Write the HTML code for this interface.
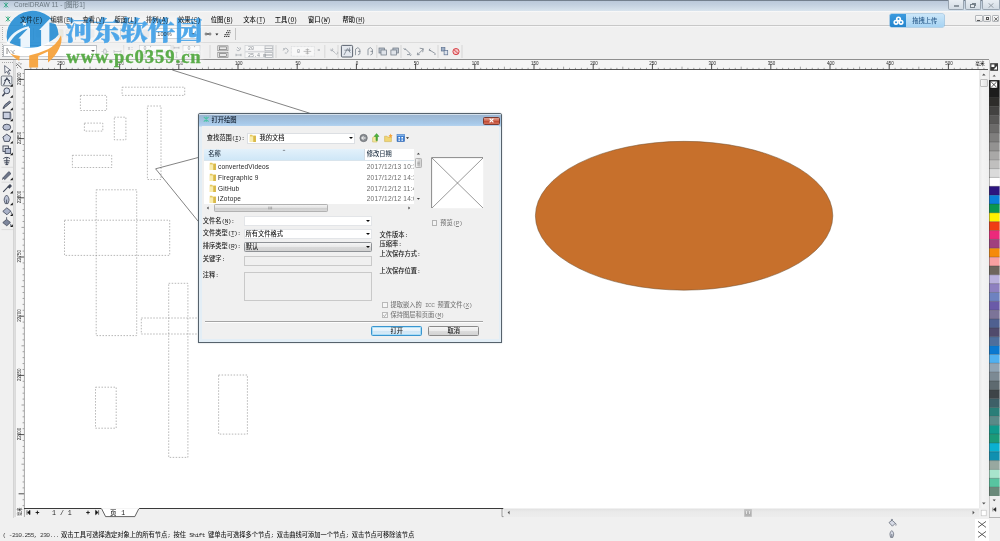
<!DOCTYPE html>
<html lang="zh"><head><meta charset="utf-8"><title>CorelDRAW 11 - [图形1]</title>
<style>
html,body{margin:0;padding:0}
body{width:1000px;height:541px;overflow:hidden;position:relative;background:#f0f0f0;
 font-family:"Liberation Sans","Noto Sans CJK SC",sans-serif;font-size:6.25px;color:#1a1a1a;line-height:1;font-weight:500;will-change:transform}
.a{position:absolute}
.t{position:absolute;white-space:nowrap;line-height:8px;height:8px}
u{text-decoration:underline;text-decoration-thickness:0.5px;text-underline-offset:0.5px;text-decoration-color:rgba(40,40,40,0.55)}
.g{color:#7c7c7c}
.ic{position:absolute;border-radius:1px}
.sep{position:absolute;width:0.6px;background:#c4c4c4}
.fld{position:absolute;background:#fff;border:0.5px solid #b4b8bd;box-sizing:border-box}
.dfld{position:absolute;background:#f0f0f0;border:0.6px solid #c9c9c9;box-sizing:border-box}
.arr{position:absolute;width:0;height:0;border-left:2.3px solid transparent;border-right:2.3px solid transparent;border-top:2.5px solid #0a0a0a;margin-left:-0.4px}
.m{font-family:"Liberation Mono",monospace;letter-spacing:-0.625px}
.m u{text-decoration-thickness:0.5px}
</style></head>
<body>
<div class="a" style="left:0;top:0;width:1000px;height:11px;background:linear-gradient(#aebbcb 0,#bccadb 14%,#c4d1e0 45%,#d3dfea 85%,#d9e4ee 100%)"></div>
<div class="a" style="left:0;top:0;width:1000px;height:0.9px;background:#74808e"></div>
<div class="a" style="left:0;top:10.6px;width:1000px;height:0.8px;background:#a9b3bd"></div>
<svg class="a" style="left:2.6px;top:2.4px" width="6" height="6" viewBox="0 0 8 8"><path d="M1 1L7 7M7 1L1 7M4 0.5V7.5" stroke="#3aa98a" stroke-width="1.2" fill="none"/></svg>
<div class="t" style="left:14px;top:1.2px;font-size:6.6px;color:#6c7982">CorelDRAW 11 - [图形1]</div>
<div class="a" style="left:948.2px;top:0;width:15.8px;height:9.6px;box-sizing:border-box;border:0.7px solid #98a4b0;border-top:none;border-radius:0 0 2px 2px;background:linear-gradient(#e9eef3,#d3dce5)"></div>
<div class="a" style="left:964.7px;top:0;width:16.5px;height:9.6px;box-sizing:border-box;border:0.7px solid #98a4b0;border-top:none;border-radius:0 0 2px 2px;background:linear-gradient(#e9eef3,#d3dce5)"></div>
<div class="a" style="left:982.0px;top:0;width:18.0px;height:9.6px;box-sizing:border-box;border:0.7px solid #98a4b0;border-top:none;border-radius:0 0 2px 2px;background:linear-gradient(#e9eef3,#d3dce5)"></div>
<div class="a" style="left:953.5px;top:5px;width:5.5px;height:2px;box-sizing:border-box;border:0.6px solid #8c969f;background:#fff"></div>
<div class="a" style="left:971.5px;top:2.6px;width:4.5px;height:3.4px;box-sizing:border-box;border:0.6px solid #77828c"></div>
<div class="a" style="left:970px;top:4.2px;width:4.5px;height:3.4px;box-sizing:border-box;border:0.6px solid #77828c;background:#e6ebf0"></div>
<svg class="a" style="left:988px;top:2.5px" width="6" height="5" viewBox="0 0 6 5"><path d="M0.5 0.3L5.5 4.7M5.5 0.3L0.5 4.7" stroke="#8e98a1" stroke-width="0.9"/></svg>
<div class="a" style="left:0;top:11.4px;width:1000px;height:14px;background:linear-gradient(#fbfbfb 0,#f0f0f0 1.6px)"></div>
<div class="a" style="left:0;top:24.8px;width:1000px;height:0.8px;background:#c8c8c8"></div>
<svg class="a" style="left:4.5px;top:15.5px" width="6" height="6" viewBox="0 0 8 8"><path d="M1 1L7 7M7 1L1 7M4 0.5V7.5" stroke="#2fa77c" stroke-width="1.2" fill="none"/></svg>
<div class="t" style="left:20.0px;top:15.9px;font-size:6.3px;font-weight:500;color:#0c0c0c;z-index:3;opacity:0.8">文件<span class="m">(<u>F</u>)</span></div>
<div class="t" style="left:50.5px;top:15.9px;font-size:6.3px;font-weight:500;color:#0c0c0c;z-index:3;opacity:0.8">编辑<span class="m">(<u>E</u>)</span></div>
<div class="t" style="left:82.5px;top:15.9px;font-size:6.3px;font-weight:500;color:#0c0c0c;z-index:3;opacity:0.8">查看<span class="m">(<u>V</u>)</span></div>
<div class="t" style="left:114.5px;top:15.9px;font-size:6.3px;font-weight:500;color:#0c0c0c;z-index:3;opacity:0.8">版面<span class="m">(<u>L</u>)</span></div>
<div class="t" style="left:146.0px;top:15.9px;font-size:6.3px;font-weight:500;color:#0c0c0c;z-index:3;opacity:0.8">排列<span class="m">(<u>A</u>)</span></div>
<div class="t" style="left:178.0px;top:15.9px;font-size:6.3px;font-weight:500;color:#0c0c0c;z-index:3;opacity:0.8">效果<span class="m">(<u>C</u>)</span></div>
<div class="t" style="left:210.7px;top:15.9px;font-size:6.3px;font-weight:500;color:#0c0c0c;z-index:3;opacity:1">位图<span class="m">(<u>B</u>)</span></div>
<div class="t" style="left:243.2px;top:15.9px;font-size:6.3px;font-weight:500;color:#0c0c0c;z-index:3;opacity:1">文本<span class="m">(<u>T</u>)</span></div>
<div class="t" style="left:274.7px;top:15.9px;font-size:6.3px;font-weight:500;color:#0c0c0c;z-index:3;opacity:1">工具<span class="m">(<u>O</u>)</span></div>
<div class="t" style="left:308.0px;top:15.9px;font-size:6.3px;font-weight:500;color:#0c0c0c;z-index:3;opacity:1">窗口<span class="m">(<u>W</u>)</span></div>
<div class="t" style="left:342.5px;top:15.9px;font-size:6.3px;font-weight:500;color:#0c0c0c;z-index:3;opacity:1">帮助<span class="m">(<u>H</u>)</span></div>
<div class="a" style="left:975.0px;top:15px;width:7.8px;height:7.4px;box-sizing:border-box;border:0.6px solid #b3b7bb;background:linear-gradient(#fafafa,#e3e3e3);border-radius:1px"></div>
<div class="a" style="left:983.3px;top:15px;width:7.8px;height:7.4px;box-sizing:border-box;border:0.6px solid #b3b7bb;background:linear-gradient(#fafafa,#e3e3e3);border-radius:1px"></div>
<div class="a" style="left:991.6px;top:15px;width:7.8px;height:7.4px;box-sizing:border-box;border:0.6px solid #b3b7bb;background:linear-gradient(#fafafa,#e3e3e3);border-radius:1px"></div>
<div class="a" style="left:977.3px;top:19.8px;width:3px;height:0.8px;background:#555"></div>
<div class="a" style="left:985.8px;top:17.2px;width:2.8px;height:2.6px;box-sizing:border-box;border:0.6px solid #555"></div>
<svg class="a" style="left:994px;top:17px" width="4" height="4" viewBox="0 0 4 4"><path d="M0.3 0.3L3.7 3.7M3.7 0.3L0.3 3.7" stroke="#555" stroke-width="0.8"/></svg>
<div class="a" style="left:0;top:25.6px;width:1000px;height:16.7px;background:linear-gradient(#fafafa 0,#f0f0f0 1.4px)"></div>
<div class="a" style="left:1.5px;top:27px;width:1px;height:13px;border-left:0.6px dotted #aaa"></div>
<div class="ic" style="left:6.0px;top:30px;width:6.4px;height:6.8px;background:#d9dde3;opacity:0.4;box-shadow:0 0 0 0.4px #b9bec4"></div>
<div class="ic" style="left:15.5px;top:30px;width:6.4px;height:6.8px;background:#e3d7a6;opacity:0.4;box-shadow:0 0 0 0.4px #b9bec4"></div>
<div class="ic" style="left:25.0px;top:30px;width:6.4px;height:6.8px;background:#b9c4d6;opacity:0.4;box-shadow:0 0 0 0.4px #b9bec4"></div>
<div class="ic" style="left:36.0px;top:30px;width:6.4px;height:6.8px;background:#c9c9c9;opacity:0.4;box-shadow:0 0 0 0.4px #b9bec4"></div>
<div class="ic" style="left:47.0px;top:30px;width:6.4px;height:6.8px;background:#d6d6d6;opacity:0.4;box-shadow:0 0 0 0.4px #b9bec4"></div>
<div class="ic" style="left:56.5px;top:30px;width:6.4px;height:6.8px;background:#d9d3b9;opacity:0.4;box-shadow:0 0 0 0.4px #b9bec4"></div>
<div class="ic" style="left:66.0px;top:30px;width:6.4px;height:6.8px;background:#d3d3d3;opacity:0.4;box-shadow:0 0 0 0.4px #b9bec4"></div>
<div class="ic" style="left:78.0px;top:30px;width:6.4px;height:6.8px;background:#c2cad6;opacity:0.4;box-shadow:0 0 0 0.4px #b9bec4"></div>
<div class="ic" style="left:88.0px;top:30px;width:6.4px;height:6.8px;background:#c2cad6;opacity:0.4;box-shadow:0 0 0 0.4px #b9bec4"></div>
<div class="ic" style="left:101.0px;top:30px;width:6.4px;height:6.8px;background:#cfd6cf;opacity:0.4;box-shadow:0 0 0 0.4px #b9bec4"></div>
<div class="ic" style="left:111.0px;top:30px;width:6.4px;height:6.8px;background:#cfd6cf;opacity:0.4;box-shadow:0 0 0 0.4px #b9bec4"></div>
<div class="ic" style="left:122.0px;top:30px;width:6.4px;height:6.8px;background:#cdd3dc;opacity:0.4;box-shadow:0 0 0 0.4px #b9bec4"></div>
<div class="ic" style="left:132.0px;top:30px;width:6.4px;height:6.8px;background:#cdd3dc;opacity:0.4;box-shadow:0 0 0 0.4px #b9bec4"></div>
<div class="ic" style="left:142.5px;top:30px;width:6.4px;height:6.8px;background:#bcbcc8;opacity:0.4;box-shadow:0 0 0 0.4px #b9bec4"></div>
<div class="sep" style="left:33.3px;top:27.5px;height:12.5px"></div>
<div class="sep" style="left:75.0px;top:27.5px;height:12.5px"></div>
<div class="sep" style="left:98.0px;top:27.5px;height:12.5px"></div>
<div class="sep" style="left:119.5px;top:27.5px;height:12.5px"></div>
<div class="sep" style="left:152.5px;top:27.5px;height:12.5px"></div>
<div class="sep" style="left:199.5px;top:27.5px;height:12.5px"></div>
<div class="fld" style="left:155px;top:28.3px;width:42.5px;height:11.2px"></div>
<div class="t" style="left:157.3px;top:30.2px;font-size:5.6px;color:#222;z-index:3;opacity:0.8">100%</div>
<div class="arr" style="left:191.8px;top:33.2px"></div>
<svg class="a" style="left:203px;top:29px" width="32" height="10" viewBox="0 0 32 10"><path d="M1.5 5h7M3 3.4v3.2M7 3.4v3.2" stroke="#555" stroke-width="0.8" fill="none"/><rect x="3.6" y="4" width="2.6" height="2" fill="#777"/><path d="M12.4 4.6h3l-1.5 1.8z" fill="#222"/><path d="M21 7.5h6M21.5 5.6h5M23 3.6h4.4M24 1.8h3.4" stroke="#444" stroke-width="1.1" stroke-dasharray="1.4 0.6"/></svg>
<div class="sep" style="left:234.6px;top:27.5px;height:12.5px"></div>
<div class="a" style="left:0;top:42.3px;width:1000px;height:17px;background:#f0f0f0"></div>
<div class="a" style="left:0;top:42.2px;width:460px;height:0.6px;background:#dcdcdc"></div>
<div class="a" style="left:1.5px;top:44px;width:1px;height:13px;border-left:0.6px dotted #aaa"></div>
<div class="fld" style="left:3px;top:45px;width:94px;height:12px"></div>
<svg class="a" style="left:6px;top:46.5px" width="12" height="9" viewBox="0 0 12 9"><path d="M1 1v6M1 1l3 5M4.5 3l4 4M9 3.5c-2 0-3 2-1.5 3.5" stroke="#666" stroke-width="0.8" fill="none"/></svg>
<div class="arr" style="left:91.6px;top:50.3px"></div>
<svg class="a" style="left:98px;top:43.5px" width="380" height="15" viewBox="0 0 380 15">
<g fill="none" stroke="#8d949c" stroke-width="0.6">
<path d="M3.5 7.5h7M7 4v7"/><rect x="5.4" y="5.9" width="3.2" height="3.2" fill="#e4e6ea"/>
<path d="M16 7.5h7M16 6v3M23 6v3"/>
<rect x="41.5" y="1.6" width="31.5" height="5.6" fill="#fbfbfb" stroke="#c4c7cb"/><rect x="41.5" y="8.2" width="31.5" height="5.6" fill="#fbfbfb" stroke="#c4c7cb"/>
<rect x="85" y="1.6" width="17" height="5.6" fill="#fbfbfb" stroke="#c4c7cb"/><rect x="85" y="8.2" width="17" height="5.6" fill="#fbfbfb" stroke="#c4c7cb"/>
<path d="M76 3.8h5M76 2.8v2M81 2.8v2M78.5 8.4v5M77.5 8.4h2M77.5 13.4h2"/>
<rect x="119.8" y="1.8" width="10.2" height="5" fill="#e9e9e9" stroke="#7d7d7d"/><rect x="119.8" y="8.6" width="10.2" height="5" fill="#e9e9e9" stroke="#7d7d7d"/>
<rect x="121.5" y="2.9" width="6.8" height="2.8" stroke="#666"/><rect x="121.5" y="9.7" width="6.8" height="2.8" stroke="#666"/>
<rect x="147" y="1.4" width="28.6" height="5.8" fill="#f7f7f7" stroke="#c9ccd0"/><rect x="147" y="8" width="28.6" height="5.8" fill="#f7f7f7" stroke="#c9ccd0"/>
<path d="M139 3l2.5 2.5M138.5 5.8a2 2 0 1 0 3.5-2.5M138 11h5M138 9.8v2.4M143 9.8v2.4"/>
<rect x="167" y="2" width="7.6" height="2.2" stroke="#a5a9ae"/><rect x="167" y="4.6" width="7.6" height="2.2" stroke="#a5a9ae"/><rect x="167" y="8.6" width="7.6" height="2.2" stroke="#a5a9ae"/><rect x="167" y="11.2" width="7.6" height="2.2" stroke="#a5a9ae"/>
<path d="M186 5a2.4 2.4 0 1 1 0.8 4M185 4.4l1.4 1-1.6 0.9"/>
<rect x="193.4" y="2.6" width="23" height="9.6" fill="#f8f8f8" stroke="#c9ccd0" stroke-dasharray="0.8 0.6"/>
<path d="M205.6 7.4h7.6M209.4 4.4v6M207.6 5.6h3.6M207.6 9.2h3.6" stroke="#999"/>
<path d="M232.6 5.2l4.5 3.6M234 4.4a1.2 1.2 0 1 1-1.6 1.4M237.5 9.4a1.2 1.2 0 1 0 1.4-1.6"/>
</g>
<g font-family="Liberation Mono,monospace" font-size="5" fill="#8a8f95">
<text x="29.5" y="6.2">x:</text><text x="29.5" y="12.8">y:</text><text x="45.5" y="6.2">0</text><text x="45.5" y="12.8">0</text><text x="89.5" y="6.2">0</text><text x="89.5" y="12.8">0</text>
<text x="150" y="6">20</text><text x="150" y="12.6">25.4 m</text><text x="199" y="9">0</text><text x="219.5" y="6.6" font-size="4.2">o</text>
<text x="51.4" y="4.6" font-size="3.4">"</text><text x="95.4" y="4.6" font-size="3.4">"</text>
</g>
<rect x="243.4" y="1.4" width="11.2" height="11.6" rx="1" fill="#e4e8ee" stroke="#4c5561" stroke-width="0.9"/>
<g fill="none" stroke="#6c7681" stroke-width="0.7">
<g transform="translate(249 7.4)"><path d="M-3 3.6l3.4-6.4 3 4.2M-2.6-1.2h6.4M2.4-3.8v4"/></g>
<g transform="translate(260 7.6)"><path d="M-2.5-2.4v6M-2.5-2.4l2.4-1.6 2 1.8v4.4l-2 1.2M0-0.2h2.4"/></g>
<g transform="translate(272.5 7.6)"><path d="M-2.5-2.4v6M-2.5-2.4l2.4-1.6 2 1.8v4.4l-2 1.2M0-0.2h2.4"/></g>
<g transform="translate(285 7.5)"><rect x="-4" y="-3.5" width="5.6" height="5" fill="#b9c1cc"/><rect x="-2" y="-1.5" width="5.6" height="5" fill="#dfe3e9"/></g>
<g transform="translate(296.5 7.5)"><rect x="-1.6" y="-3.5" width="5.6" height="5" fill="#b9c1cc"/><rect x="-3.6" y="-1.5" width="5.6" height="5" fill="#dfe3e9"/></g>
<g transform="translate(310 7.4)"><path d="M-3-2.8l5.4 5.2M-3.8-3.4a1 1 0 1 0 1.6 1.2M2 2a1 1 0 1 0 1.4 1.2M-1 3.2h2"/></g>
<g transform="translate(322.7 7.4)"><path d="M-2.6 2.8l5.2-5.2M-1-3.2l3.6 0.6-0.6 3.4M-3 1.2l-0.4 2.2 2.4-0.2"/></g>
<g transform="translate(334.5 7.6)"><path d="M-2.9-1.6l5.4 3.4M-2.5-3l-1 1.6 1.8 0.6M1.9 3l1.6-0.8"/></g>
<g transform="translate(346.5 7.4)"><rect x="-3.2" y="-3.8" width="3.6" height="3.4" fill="#9fb0c7" stroke="#5e7291"/><rect x="-0.4" y="-1" width="3.6" height="4.4" fill="#dbe2ec" stroke="#5e7291"/></g>
</g>
<circle cx="358" cy="7.6" r="3.1" fill="#f3c6c6" stroke="#d9434a" stroke-width="1"/><path d="M355.9 5.6l4.2 4" stroke="#d9434a" stroke-width="1"/>
<g stroke="#c7c7c7" stroke-width="0.6"><path d="M25.7 1v13M75 1v13M112 1v13M178 1v13M226.8 1v13M240 1v13M278.8 1v13M303 1v13M340 1v13M364 1v13"/></g>
</svg>
<div class="a" style="left:890.2px;top:14.2px;width:54px;height:12.8px;border-radius:1.5px;background:linear-gradient(#cbe6f9,#a6d3f2);box-shadow:0 0 0 0.6px #7fb4dc"></div>
<div class="a" style="left:890.2px;top:14.2px;width:15.6px;height:12.8px;border-radius:1.5px 0 0 1.5px;background:linear-gradient(#3b9ade,#2585cd)"></div>
<svg class="a" style="left:892.5px;top:16px" width="11" height="9.5" viewBox="0 0 22 19"><g fill="none" stroke="#fff" stroke-width="3.2"><circle cx="11" cy="6" r="3.6"/><circle cx="6" cy="12.6" r="3.6"/><circle cx="16" cy="12.6" r="3.6"/></g></svg>
<div class="t" style="left:912.2px;top:16.8px;font-size:6.3px;color:#2c5d8c">拖拽上传</div>
<div class="a" style="left:0;top:58.9px;width:988.5px;height:0.8px;background:#8f8f8f"></div>
<div class="a" style="left:14.5px;top:59.8px;width:974px;height:10px;background:#f4f4f4"></div>
<div class="a" style="left:14.5px;top:69.8px;width:10px;height:447px;background:#f6f6f6"></div>
<svg class="a" style="left:0;top:59px" width="1000" height="459" viewBox="0 59 1000 459"><path d="M30.80 66.7V69.4M36.72 67.8V69.4M42.64 67.8V69.4M48.56 67.8V69.4M54.48 67.8V69.4M66.32 67.8V69.4M72.24 67.8V69.4M78.16 67.8V69.4M84.08 67.8V69.4M90.00 66.7V69.4M95.92 67.8V69.4M101.84 67.8V69.4M107.76 67.8V69.4M113.68 67.8V69.4M125.52 67.8V69.4M131.44 67.8V69.4M137.36 67.8V69.4M143.28 67.8V69.4M149.20 66.7V69.4M155.12 67.8V69.4M161.04 67.8V69.4M166.96 67.8V69.4M172.88 67.8V69.4M184.72 67.8V69.4M190.64 67.8V69.4M196.56 67.8V69.4M202.48 67.8V69.4M208.40 66.7V69.4M214.32 67.8V69.4M220.24 67.8V69.4M226.16 67.8V69.4M232.08 67.8V69.4M243.92 67.8V69.4M249.84 67.8V69.4M255.76 67.8V69.4M261.68 67.8V69.4M267.60 66.7V69.4M273.52 67.8V69.4M279.44 67.8V69.4M285.36 67.8V69.4M291.28 67.8V69.4M303.12 67.8V69.4M309.04 67.8V69.4M314.96 67.8V69.4M320.88 67.8V69.4M326.80 66.7V69.4M332.72 67.8V69.4M338.64 67.8V69.4M344.56 67.8V69.4M350.48 67.8V69.4M362.32 67.8V69.4M368.24 67.8V69.4M374.16 67.8V69.4M380.08 67.8V69.4M386.00 66.7V69.4M391.92 67.8V69.4M397.84 67.8V69.4M403.76 67.8V69.4M409.68 67.8V69.4M421.52 67.8V69.4M427.44 67.8V69.4M433.36 67.8V69.4M439.28 67.8V69.4M445.20 66.7V69.4M451.12 67.8V69.4M457.04 67.8V69.4M462.96 67.8V69.4M468.88 67.8V69.4M480.72 67.8V69.4M486.64 67.8V69.4M492.56 67.8V69.4M498.48 67.8V69.4M504.40 66.7V69.4M510.32 67.8V69.4M516.24 67.8V69.4M522.16 67.8V69.4M528.08 67.8V69.4M539.92 67.8V69.4M545.84 67.8V69.4M551.76 67.8V69.4M557.68 67.8V69.4M563.60 66.7V69.4M569.52 67.8V69.4M575.44 67.8V69.4M581.36 67.8V69.4M587.28 67.8V69.4M599.12 67.8V69.4M605.04 67.8V69.4M610.96 67.8V69.4M616.88 67.8V69.4M622.80 66.7V69.4M628.72 67.8V69.4M634.64 67.8V69.4M640.56 67.8V69.4M646.48 67.8V69.4M658.32 67.8V69.4M664.24 67.8V69.4M670.16 67.8V69.4M676.08 67.8V69.4M682.00 66.7V69.4M687.92 67.8V69.4M693.84 67.8V69.4M699.76 67.8V69.4M705.68 67.8V69.4M717.52 67.8V69.4M723.44 67.8V69.4M729.36 67.8V69.4M735.28 67.8V69.4M741.20 66.7V69.4M747.12 67.8V69.4M753.04 67.8V69.4M758.96 67.8V69.4M764.88 67.8V69.4M776.72 67.8V69.4M782.64 67.8V69.4M788.56 67.8V69.4M794.48 67.8V69.4M800.40 66.7V69.4M806.32 67.8V69.4M812.24 67.8V69.4M818.16 67.8V69.4M824.08 67.8V69.4M835.92 67.8V69.4M841.84 67.8V69.4M847.76 67.8V69.4M853.68 67.8V69.4M859.60 66.7V69.4M865.52 67.8V69.4M871.44 67.8V69.4M877.36 67.8V69.4M883.28 67.8V69.4M895.12 67.8V69.4M901.04 67.8V69.4M906.96 67.8V69.4M912.88 67.8V69.4M918.80 66.7V69.4M924.72 67.8V69.4M930.64 67.8V69.4M936.56 67.8V69.4M942.48 67.8V69.4M954.32 67.8V69.4M960.24 67.8V69.4M966.16 67.8V69.4M972.08 67.8V69.4M978.00 66.7V69.4M983.92 67.8V69.4" stroke="#4a4a4a" stroke-width="0.5" fill="none"/><path d="M60.40 63.8V69.4M119.60 63.8V69.4M178.80 63.8V69.4M238.00 63.8V69.4M297.20 63.8V69.4M356.40 63.8V69.4M415.60 63.8V69.4M474.80 63.8V69.4M534.00 63.8V69.4M593.20 63.8V69.4M652.40 63.8V69.4M711.60 63.8V69.4M770.80 63.8V69.4M830.00 63.8V69.4M889.20 63.8V69.4M948.40 63.8V69.4" stroke="#2e2e2e" stroke-width="0.85" fill="none"/><path d="M22.6 73.48H24.2M22.6 85.32H24.2M22.6 91.24H24.2M22.6 97.16H24.2M22.6 103.08H24.2M21.5 109.00H24.2M22.6 114.92H24.2M22.6 120.84H24.2M22.6 126.76H24.2M22.6 132.68H24.2M22.6 144.52H24.2M22.6 150.44H24.2M22.6 156.36H24.2M22.6 162.28H24.2M21.5 168.20H24.2M22.6 174.12H24.2M22.6 180.04H24.2M22.6 185.96H24.2M22.6 191.88H24.2M22.6 203.72H24.2M22.6 209.64H24.2M22.6 215.56H24.2M22.6 221.48H24.2M21.5 227.40H24.2M22.6 233.32H24.2M22.6 239.24H24.2M22.6 245.16H24.2M22.6 251.08H24.2M22.6 262.92H24.2M22.6 268.84H24.2M22.6 274.76H24.2M22.6 280.68H24.2M21.5 286.60H24.2M22.6 292.52H24.2M22.6 298.44H24.2M22.6 304.36H24.2M22.6 310.28H24.2M22.6 322.12H24.2M22.6 328.04H24.2M22.6 333.96H24.2M22.6 339.88H24.2M21.5 345.80H24.2M22.6 351.72H24.2M22.6 357.64H24.2M22.6 363.56H24.2M22.6 369.48H24.2M22.6 381.32H24.2M22.6 387.24H24.2M22.6 393.16H24.2M22.6 399.08H24.2M21.5 405.00H24.2M22.6 410.92H24.2M22.6 416.84H24.2M22.6 422.76H24.2M22.6 428.68H24.2M22.6 440.52H24.2M22.6 446.44H24.2M22.6 452.36H24.2M22.6 458.28H24.2M21.5 464.20H24.2M22.6 470.12H24.2M22.6 476.04H24.2M22.6 481.96H24.2M22.6 487.88H24.2M22.6 499.72H24.2M22.6 505.64H24.2" stroke="#4a4a4a" stroke-width="0.5" fill="none"/><path d="M18.6 79.40H24.2M18.6 138.60H24.2M18.6 197.80H24.2M18.6 257.00H24.2M18.6 316.20H24.2M18.6 375.40H24.2M18.6 434.60H24.2M18.6 493.80H24.2" stroke="#2e2e2e" stroke-width="0.85" fill="none"/><path d="M24.4 69.55H988" stroke="#3a3a3a" stroke-width="0.9" fill="none"/><path d="M24.4 69.4V517" stroke="#858585" stroke-width="0.7" fill="none"/><path d="M15.1 60V517" stroke="#a9a9a9" stroke-width="0.6" fill="none"/><g font-family="Liberation Sans,sans-serif" font-size="4.5" fill="#2a2a2a" text-anchor="middle"><text x="61.1" y="64.5">250</text><text x="120.3" y="64.5">200</text><text x="179.5" y="64.5">150</text><text x="238.7" y="64.5">100</text><text x="297.9" y="64.5">50</text><text x="357.1" y="64.5">0</text><text x="416.3" y="64.5">50</text><text x="475.5" y="64.5">100</text><text x="534.7" y="64.5">150</text><text x="593.9" y="64.5">200</text><text x="653.1" y="64.5">250</text><text x="712.3" y="64.5">300</text><text x="771.5" y="64.5">350</text><text x="830.7" y="64.5">400</text><text x="889.9" y="64.5">450</text><text x="949.1" y="64.5">500</text><text transform="translate(20.7 78.7) rotate(-90)" x="0" y="0">22900</text><text transform="translate(20.7 137.9) rotate(-90)" x="0" y="0">22850</text><text transform="translate(20.7 197.1) rotate(-90)" x="0" y="0">22800</text><text transform="translate(20.7 256.3) rotate(-90)" x="0" y="0">22750</text><text transform="translate(20.7 315.5) rotate(-90)" x="0" y="0">22700</text><text transform="translate(20.7 374.7) rotate(-90)" x="0" y="0">22650</text><text transform="translate(20.7 433.9) rotate(-90)" x="0" y="0">22600</text></g><text x="975.2" y="64.6" font-size="4.7" font-weight="500" font-family="Liberation Sans,Noto Sans CJK SC,sans-serif" fill="#111">毫米</text><path d="M16.5 63.5l5 4.6M21.5 63.8l-1.2 0.2M17 68l0.8-0.6M19 62.4v1M16 65.4h1" stroke="#333" stroke-width="0.7" fill="none"/><text transform="translate(20.6 516) rotate(-90)" x="0" y="0" font-size="4.2" font-family="Liberation Sans,Noto Sans CJK SC,sans-serif" fill="#333">毫米</text></svg>
<div class="a" style="left:0;top:59.8px;width:14.3px;height:458px;background:#f0f0f0;border-right:0.6px solid #d4d4d4;box-sizing:border-box"></div>
<div class="a" style="left:1.5px;top:62px;width:11px;height:0;border-top:0.6px dotted #aaa"></div>
<svg class="a" style="left:0;top:60px" width="15" height="172" viewBox="0 60 15 172"><rect x="1.3" y="76" width="10.6" height="9.8" rx="1.2" fill="#e9ecf0" stroke="#555c66" stroke-width="0.8"/><path d="M1.5 167.3H13M1.5 182.2H13M1.5 229.6H13" stroke="#cfcfcf" stroke-width="0.6"/><path d="M4.6 65.6l0.4 7.6 1.9-1.9 1.7 3.2 1.2-0.7-1.7-3 2.6-0.4z" fill="#f4f5f8" stroke="#4a5264" stroke-width="0.8"/><path d="M3.6 85l3.2-7.4M6.8 77.6l3.6 6.6M4.2 80.6c2-1.8 4.2-1.4 5.8 0.4" fill="none" stroke="#3f4657" stroke-width="1"/><path d="M12.8 86.8v-2.7l-2.7 2.7z" fill="#111"/><circle cx="6.8" cy="90.8" r="2.9" fill="#d3dbea" stroke="#4a5264" stroke-width="1"/><path d="M4.8 93.2l-2.4 3" stroke="#3f4657" stroke-width="1.5"/><path d="M12.8 97.8v-2.7l-2.7 2.7z" fill="#111"/><path d="M3 108.2l1.8-3.4 4.8-3.8 1.2 1.4-4.6 4zM2.8 108.6l2.2-0.8" fill="#7b8498" stroke="#3f4657" stroke-width="0.8"/><path d="M12.8 110.2v-2.7l-2.7 2.7z" fill="#111"/><rect x="3.2" y="112.2" width="7" height="6.4" fill="#c9cfe0" stroke="#3f4657" stroke-width="1"/><path d="M4.2 119.4h6.8v-6" stroke="#8a90a0" stroke-width="0.7" fill="none"/><path d="M12.8 121.2v-2.7l-2.7 2.7z" fill="#111"/><ellipse cx="6.8" cy="127.2" rx="3.9" ry="3" fill="#b9c0d4" stroke="#3f4657" stroke-width="0.9"/><path d="M12.8 132.5v-2.7l-2.7 2.7z" fill="#111"/><path d="M6.8 134.2l3.9 2.8-1.5 4.4h-4.8l-1.5-4.4z" fill="#c9cfe0" stroke="#3f4657" stroke-width="0.9"/><path d="M12.8 143.6v-2.7l-2.7 2.7z" fill="#111"/><rect x="3" y="146" width="5.4" height="5.4" fill="#eef0f5" stroke="#3f4657" stroke-width="0.9"/><rect x="5.2" y="148.4" width="5.4" height="5" fill="#b3bbd0" stroke="#3f4657" stroke-width="0.9"/><path d="M12.8 155.2v-2.7l-2.7 2.7z" fill="#111"/><path d="M3.4 158.6c1.6-1.6 5-1.6 6.6 0M3.8 160.8h6M4.4 162.8h4.8M5.4 164.6h2.8M6.8 157.4v7.6" stroke="#3f4657" stroke-width="1" fill="none"/><path d="M2.8 178l6-6.4 2.2 2-6.2 6zM2.8 178l-0.4 1.8" fill="#6d7589" stroke="#3f4657" stroke-width="0.7"/><path d="M12.8 180.2v-2.7l-2.7 2.7z" fill="#111"/><path d="M3.2 191.8l4.8-5M8 186.6l2-1.8 1.2 1.2-1.8 2z" fill="#3f4657" stroke="#3f4657" stroke-width="1.1"/><path d="M12.8 193.5v-2.7l-2.7 2.7z" fill="#111"/><path d="M6.6 195c1.8 1.6 2.6 3.4 2.4 5.4l-1 3.2h-2.8l-1-3.2c-0.2-2 0.6-3.8 2.4-5.4zM6.6 199.6v3.8" fill="#bcc3d6" stroke="#3f4657" stroke-width="0.8"/><path d="M12.8 205.2v-2.7l-2.7 2.7z" fill="#111"/><path d="M2.8 211.4l4-3.6 4 3.2-3.8 3.8zM10.8 211.4c0.6 1 0.8 2 0.4 2.8" fill="#a9b1c7" stroke="#3f4657" stroke-width="0.8"/><path d="M12.8 216.0v-2.7l-2.7 2.7z" fill="#111"/><path d="M2.8 222.6l3.8-3.2 3.8 3-3.6 3.4zM6.6 217.2v2.2M10.4 223.8c0.6 0.8 0.6 1.8 0 2.2" fill="#7e879d" stroke="#3f4657" stroke-width="0.8"/><path d="M12.8 226.9v-2.7l-2.7 2.7z" fill="#111"/></svg>
<div class="a" style="left:24.8px;top:70.1px;width:954.2px;height:438px;background:#fff"></div>
<svg class="a" style="left:0;top:0" width="1000" height="541" viewBox="0 0 1000 541"><g fill="none" stroke="#828282" stroke-width="0.58" stroke-dasharray="1.5 1.5"><rect x="122.1" y="87.2" width="62.6" height="8.2"/><rect x="80.4" y="95.4" width="26.2" height="15.1"/><rect x="84.4" y="123.1" width="18.4" height="8.0"/><rect x="114.3" y="117.2" width="11.6" height="22.6"/><rect x="147.4" y="106.0" width="13.6" height="73.5"/><rect x="72.4" y="155.3" width="39.3" height="12.2"/><rect x="96.2" y="189.8" width="40.5" height="145.8"/><rect x="64.5" y="220.2" width="105.2" height="35.2"/><rect x="168.7" y="283.3" width="19.2" height="174.1"/><rect x="141.3" y="318.0" width="118.7" height="16.0"/><rect x="95.5" y="387.2" width="20.7" height="41.0"/><rect x="218.6" y="375.0" width="28.8" height="59.1"/></g><path d="M172.3 70L309.7 113.2M155.6 168.8L198.2 157.5M155.6 168.8L198.2 221.3" stroke="#4e4e4e" stroke-width="0.7" fill="none"/><ellipse cx="684.1" cy="215.75" rx="148.7" ry="74.4" fill="#c7702c" stroke="#6b4a2a" stroke-width="0.5"/></svg>
<div class="a" style="left:979px;top:70.1px;width:9.6px;height:438px;background:linear-gradient(90deg,#e9e9e9,#f4f4f4 35%,#efefef)"></div>
<div class="a" style="left:979.6px;top:79.4px;width:8px;height:7.6px;box-sizing:border-box;border:0.6px solid #bdbdbd;border-radius:1px;background:linear-gradient(90deg,#f7f7f7,#e2e2e2)"></div>
<svg class="a" style="left:979px;top:70px" width="10" height="448" viewBox="0 0 10 448"><path d="M3 5.4l1.8-2 1.8 2z M3 432.4l1.8 2 1.8-2z" fill="#555"/><rect x="2.2" y="440.2" width="5" height="5.6" fill="#fff" stroke="#bdbdbd" stroke-width="0.6"/></svg>
<div class="a" style="left:24.8px;top:508.1px;width:954.2px;height:9px;background:#f0f0f0"></div>
<div class="a" style="left:504px;top:508.6px;width:475px;height:8.4px;background:linear-gradient(#e2e2e2,#eaeaea 35%,#ededed)"></div>
<div class="a" style="left:744px;top:508.6px;width:8px;height:8px;box-sizing:border-box;border:0.5px solid #c4c4c4;border-radius:0.8px;background:linear-gradient(#c3c3c3,#adadad 60%,#b6b6b6)"></div><div class="a" style="left:746.4px;top:511px;width:3.2px;height:2.6px;border-left:0.7px solid #e4e4e4;border-right:0.7px solid #e4e4e4;box-sizing:border-box"></div>
<svg class="a" style="left:500px;top:508px" width="480" height="10" viewBox="0 0 480 10"><path d="M9.6 2.8l-2 1.8 2 1.8z M472.6 2.8l2 1.8-2 1.8z" fill="#555"/><path d="M3.6 0.6H2v8h1.6" stroke="#666" stroke-width="0.6" fill="none"/></svg>
<div class="a" style="left:24.4px;top:507.9px;width:479px;height:0.8px;background:#3a3a3a"></div>
<svg class="a" style="left:24px;top:507px" width="130" height="12" viewBox="0 0 130 12"><path d="M77.4 1.3L81.6 9.6H110.8L115 1.3" fill="#fff" stroke="#222" stroke-width="0.7"/><path d="M77.4 1.3H115.2" stroke="#fff" stroke-width="1"/><path d="M3 3.2v4.6M3.6 5.5l2.4-2.2v4.4z M74.6 3.2v4.6M74 5.5l-2.4-2.2v4.4z" fill="#111" stroke="#111" stroke-width="0.6"/><path d="M11.6 5.5h3.6M13.4 3.7v3.6M62.2 5.5h3.6M64 3.7v3.6" stroke="#111" stroke-width="0.9"/><g font-family="Liberation Mono,monospace" font-size="6.6" fill="#222"><text x="28" y="8">1 / 1</text></g><text x="86" y="8" font-size="6.4" font-family="Liberation Sans,Noto Sans CJK SC,sans-serif" fill="#111">页</text><text x="97.2" y="8" font-size="6.4" font-family="Liberation Mono,monospace" fill="#111">1</text></svg>
<div class="a" style="left:988.6px;top:59.8px;width:11.4px;height:458px;background:#f0f0f0;border-left:0.6px solid #c9c9c9;box-sizing:border-box"></div>
<div class="a" style="left:988.6px;top:517.4px;width:11.4px;height:0.6px;background:#b4b4b4"></div>
<svg class="a" style="left:989px;top:60px" width="11" height="20" viewBox="0 0 11 20"><rect x="1.2" y="3.2" width="7.8" height="7.6" fill="#3a3a3a"/><path d="M2.4 4.6h3v2.4h-3zM4.6 9.6l3.4-3.6v3.6z" fill="#fff"/><path d="M3.6 16.4l1.6-1.6 1.6 1.6z" fill="#555"/></svg>
<svg class="a" style="left:989.4px;top:79.8px" width="10.6" height="416" viewBox="0 0 10.6 416"><rect x="0" y="0" width="10.6" height="8.85" fill="#111"/><rect x="1.6" y="1.3" width="6.6" height="6.4" fill="#fff"/><path d="M2.2 1.9l5.4 5.2M7.6 1.9l-5.4 5.2" stroke="#111" stroke-width="0.7"/><rect x="0" y="8.85" width="10.6" height="8.90" fill="#1c1c1c"/><rect x="0" y="17.71" width="10.6" height="8.90" fill="#2e2d2b"/><rect x="0" y="26.56" width="10.6" height="8.90" fill="#434241"/><rect x="0" y="35.42" width="10.6" height="8.90" fill="#585756"/><rect x="0" y="44.27" width="10.6" height="8.90" fill="#6b6a69"/><rect x="0" y="53.12" width="10.6" height="8.90" fill="#7f7e7d"/><rect x="0" y="61.98" width="10.6" height="8.90" fill="#939291"/><rect x="0" y="70.83" width="10.6" height="8.90" fill="#a9a8a7"/><rect x="0" y="79.69" width="10.6" height="8.90" fill="#c0bfbe"/><rect x="0" y="88.54" width="10.6" height="8.90" fill="#dadada"/><rect x="0" y="97.39" width="10.6" height="8.90" fill="#ffffff"/><rect x="0" y="106.25" width="10.6" height="8.90" fill="#2d1680"/><rect x="0" y="115.10" width="10.6" height="8.90" fill="#0a7fd9"/><rect x="0" y="123.96" width="10.6" height="8.90" fill="#0a9650"/><rect x="0" y="132.81" width="10.6" height="8.90" fill="#fff200"/><rect x="0" y="141.66" width="10.6" height="8.90" fill="#f03c14"/><rect x="0" y="150.52" width="10.6" height="8.90" fill="#ec2a7b"/><rect x="0" y="159.37" width="10.6" height="8.90" fill="#a0407e"/><rect x="0" y="168.23" width="10.6" height="8.90" fill="#f58a0a"/><rect x="0" y="177.08" width="10.6" height="8.90" fill="#f8a0a0"/><rect x="0" y="185.93" width="10.6" height="8.90" fill="#6e655c"/><rect x="0" y="194.79" width="10.6" height="8.90" fill="#b9b0dc"/><rect x="0" y="203.64" width="10.6" height="8.90" fill="#8e80c0"/><rect x="0" y="212.50" width="10.6" height="8.90" fill="#6e82c0"/><rect x="0" y="221.35" width="10.6" height="8.90" fill="#6a5aa8"/><rect x="0" y="230.20" width="10.6" height="8.90" fill="#7c7498"/><rect x="0" y="239.06" width="10.6" height="8.90" fill="#4f6090"/><rect x="0" y="247.91" width="10.6" height="8.90" fill="#504a6c"/><rect x="0" y="256.77" width="10.6" height="8.90" fill="#4e6e9c"/><rect x="0" y="265.62" width="10.6" height="8.90" fill="#0a78d0"/><rect x="0" y="274.47" width="10.6" height="8.90" fill="#50b0f0"/><rect x="0" y="283.33" width="10.6" height="8.90" fill="#90a4b4"/><rect x="0" y="292.18" width="10.6" height="8.90" fill="#7c8a94"/><rect x="0" y="301.04" width="10.6" height="8.90" fill="#5e6a70"/><rect x="0" y="309.89" width="10.6" height="8.90" fill="#3e4448"/><rect x="0" y="318.74" width="10.6" height="8.90" fill="#3e6068"/><rect x="0" y="327.60" width="10.6" height="8.90" fill="#2a7e78"/><rect x="0" y="336.45" width="10.6" height="8.90" fill="#5a8a88"/><rect x="0" y="345.31" width="10.6" height="8.90" fill="#109a8c"/><rect x="0" y="354.16" width="10.6" height="8.90" fill="#1a9a78"/><rect x="0" y="363.01" width="10.6" height="8.90" fill="#0ab0d0"/><rect x="0" y="371.87" width="10.6" height="8.90" fill="#1090b0"/><rect x="0" y="380.72" width="10.6" height="8.90" fill="#98a8a0"/><rect x="0" y="389.58" width="10.6" height="8.90" fill="#a8e4cc"/><rect x="0" y="398.43" width="10.6" height="8.90" fill="#58c4a0"/><rect x="0" y="407.28" width="10.6" height="8.90" fill="#6a8a7a"/><path d="M0 8.85H10.6M0 17.71H10.6M0 26.56H10.6M0 35.42H10.6M0 44.27H10.6M0 53.12H10.6M0 61.98H10.6M0 70.83H10.6M0 79.69H10.6M0 88.54H10.6M0 97.39H10.6M0 106.25H10.6M0 115.10H10.6M0 123.96H10.6M0 132.81H10.6M0 141.66H10.6M0 150.52H10.6M0 159.37H10.6M0 168.23H10.6M0 177.08H10.6M0 185.93H10.6M0 194.79H10.6M0 203.64H10.6M0 212.50H10.6M0 221.35H10.6M0 230.20H10.6M0 239.06H10.6M0 247.91H10.6M0 256.77H10.6M0 265.62H10.6M0 274.47H10.6M0 283.33H10.6M0 292.18H10.6M0 301.04H10.6M0 309.89H10.6M0 318.74H10.6M0 327.60H10.6M0 336.45H10.6M0 345.31H10.6M0 354.16H10.6M0 363.01H10.6M0 371.87H10.6M0 380.72H10.6M0 389.58H10.6M0 398.43H10.6M0 407.28H10.6" stroke="rgba(40,40,40,0.55)" stroke-width="0.5"/><path d="M0.25 0V416" stroke="#333" stroke-width="0.5"/></svg>
<svg class="a" style="left:989px;top:496px" width="11" height="21" viewBox="0 0 11 21"><path d="M3.6 3.6l1.6 1.6 1.6-1.6z" fill="#444"/><path d="M3.9 11.6v3.8M6.9 11.6v3.8l-2.4-1.9z" fill="#222" stroke="#222" stroke-width="0.5"/></svg>
<div class="a" style="left:0;top:517.8px;width:1000px;height:23.2px;background:#f0f0f0"></div>
<div class="t" style="left:2.6px;top:530.6px;font-size:6.25px;color:#3a3a3a"><span class="m">( -210.255, 230...</span></div>
<div class="t" id="st" style="left:61px;top:530.6px;font-size:6.25px;color:#1c1c1c">双击工具可选择选定对象上的所有节点<span class="m">; </span>按住<span class="m"> Shift </span>键单击可选择多个节点<span class="m">; </span>双击曲线可添加一个节点<span class="m">; </span>双击节点可移除该节点</div>
<div class="a" style="left:975px;top:518.5px;width:14px;height:22.5px;background:#fff"></div>
<svg class="a" style="left:880px;top:518px" width="112" height="23" viewBox="0 0 112 23"><path d="M98 3.4l8 6M106 3.4l-8 6M98 13.4l8 6M106 13.4l-8 6" stroke="#222" stroke-width="0.7"/><path d="M9 4.6l3-2.4 3.4 3-3 3zM15.6 5.4c0.6 0.8 0.6 1.6 0.2 2.2M11.4 2.4c-0.6-1.2 1-1.6 1.4-0.4" fill="#d7dbe6" stroke="#3d4556" stroke-width="0.6"/><path d="M11.8 12.6c1.4 1.2 2 2.6 1.8 4.2l-0.8 2.6h-2.2l-0.6-2.6c-0.2-1.6 0.4-3 1.8-4.2zM11.8 16v3" fill="#d7dbe6" stroke="#3d4556" stroke-width="0.6"/></svg>
<div class="a" id="dlg" style="left:198.0px;top:113.0px;width:304.0px;height:229.6px;box-sizing:border-box;border:0.8px solid #56626c;border-radius:2.6px 2.6px 0.5px 0.5px;background:#e3eef6;box-shadow:0 0 1.2px rgba(60,80,100,0.55)"><div class="a" style="left:0;top:0;width:302.4px;height:13.2px;border-radius:2px 2px 0 0;background:linear-gradient(#c3d6e8 0,#9cb6d2 8%,#a1bedb 35%,#a8caea 75%,#b3d2ee 90%,#dde9f3 100%)"></div><div class="a" style="left:0;top:0.3px;width:302.4px;height:0.6px;background:rgba(255,255,255,0.45)"></div><div class="a" style="left:2.6px;top:12.4px;width:297.4px;height:212.6px;background:#f0f0f0"></div><svg class="a" style="left:3.6px;top:2.4px" width="6.4" height="6.4" viewBox="0 0 8 8"><path d="M1 1L7 7M7 1L1 7M4 0.5V7.5" stroke="#4cc4a8" stroke-width="1.3" fill="none"/></svg><div class="t" style="left:12.4px;top:1.8px;font-size:6.3px;color:#0d1a2a">打开绘图</div><div class="a" style="left:284.4px;top:2.8px;width:16.4px;height:7.9px;box-sizing:border-box;border:0.6px solid #7c3a30;border-radius:1.5px;background:linear-gradient(#e0a090 0,#d06a54 45%,#c14a34 55%,#d4705a 100%)"></div><svg class="a" style="left:290.1px;top:4.3px" width="5" height="5" viewBox="0 0 5 5"><path d="M0.6 0.6L4.4 4.4M4.4 0.6L0.6 4.4" stroke="#fff" stroke-width="1.2"/></svg><div class="t " style="left:7.8px;top:19.8px;">查找范围<span class="m">(<u>I</u>):</span></div><div class="fld" style="left:47.8px;top:18.6px;width:107.8px;height:11.2px;border-color:#dcdfe3"></div><svg class="a" style="left:50.2px;top:19.6px" width="7.6" height="8.6" viewBox="0 0 7.6 8.6"><path d="M0.8 0.8h2.4l0.7 0.9h3v6.3H0.8z" fill="#e6c95e"/><path d="M0.8 2.4h3.6v5.6H0.8z" fill="#f8ecae"/><path d="M4.4 1.7h2.5v6.3H4.4z" fill="#d9b94a"/></svg><div class="t " style="left:60.4px;top:20.0px;">我的文档</div><div class="arr" style="left:150.2px;top:23.4px"></div><svg class="a" style="left:159.2px;top:18.2px" width="56" height="12" viewBox="0 0 56 12"><circle cx="5.6" cy="6" r="3.7" fill="#8b8f94" stroke="#5e6266" stroke-width="0.6"/><path d="M7.6 6H4M5.4 4.2L3.6 6l1.8 1.8" stroke="#fff" stroke-width="1" fill="none"/><path d="M14.6 10V5.6l2-1.2h2.4V10z" fill="#f3e7a0" stroke="#c9b04e" stroke-width="0.5"/><path d="M18 8.6V4.4h-1.8L18.6 1.6 21 4.4h-1.6v4.2z" fill="#4fb83e" stroke="#2e8a24" stroke-width="0.5"/><path d="M26.6 9.6V4.2h2.4l0.8 0.9h3.6v4.5z" fill="#f1d675" stroke="#c9a83e" stroke-width="0.5"/><path d="M32.6 1.6l0.6 1.5 1.5 0.2-1.1 1 0.3 1.5-1.3-0.8-1.3 0.8 0.3-1.5-1.1-1 1.5-0.2z" fill="#f5a23a"/><rect x="39" y="2.6" width="7.6" height="7" fill="#3f7fd0" stroke="#2a5ea8" stroke-width="0.5"/><path d="M40.4 5h1.6v1.4h-1.6zM43.4 5h1.6v1.4h-1.6zM40.4 7.4h1.6v1.4h-1.6zM43.4 7.4h1.6v1.4h-1.6z" fill="#fff"/><path d="M39 2.6h7.6v1.4H39z" fill="#7db0ea"/><path d="M48 5.2h3l-1.5 1.8z" fill="#222"/></svg><div class="a" style="left:5.4px;top:34.5px;width:209.8px;height:55.6px;background:#fff"></div><div class="a" style="left:5.4px;top:34.5px;width:159.6px;height:11.6px;background:linear-gradient(#e3f1fb,#cfe7f7)"></div><div class="a" style="left:5.4px;top:45.9px;width:209.8px;height:0.6px;background:#d9e4ec"></div><div class="a" style="left:165.0px;top:34.5px;width:0.6px;height:11.4px;background:#d2dde6"></div><div class="a" style="left:214.6px;top:34.5px;width:0.6px;height:11.4px;background:#e2e6ea"></div><svg class="a" style="left:83.4px;top:34.8px" width="4" height="2.4" viewBox="0 0 4 2.4"><path d="M0.4 2l1.6-1.6L3.6 2z" fill="#8a9299"/></svg><div class="t " style="left:9.2px;top:36.4px;color:#2a3b4c">名称</div><div class="t " style="left:167.8px;top:36.4px;color:#2a3b4c">修改日期</div><svg class="a" style="left:9.8px;top:47.9px" width="7.6" height="8.6" viewBox="0 0 7.6 8.6"><path d="M0.8 0.8h2.4l0.7 0.9h3v6.3H0.8z" fill="#e6c95e"/><path d="M0.8 2.4h3.6v5.6H0.8z" fill="#f8ecae"/><path d="M4.4 1.7h2.5v6.3H4.4z" fill="#d9b94a"/></svg><div class="t " style="left:19.0px;top:48.5px;font-size:6.5px;letter-spacing:0.2px;color:#1e1e1e">convertedVideos</div><div class="t" style="left:167.8px;top:48.5px;width:47.2px;overflow:hidden;color:#6a6a6a;font-size:6.5px;letter-spacing:0.2px">2017/12/13 10:3</div><svg class="a" style="left:9.8px;top:59.0px" width="7.6" height="8.6" viewBox="0 0 7.6 8.6"><path d="M0.8 0.8h2.4l0.7 0.9h3v6.3H0.8z" fill="#e6c95e"/><path d="M0.8 2.4h3.6v5.6H0.8z" fill="#f8ecae"/><path d="M4.4 1.7h2.5v6.3H4.4z" fill="#d9b94a"/></svg><div class="t " style="left:19.0px;top:59.6px;font-size:6.5px;letter-spacing:0.2px;color:#1e1e1e">Firegraphic 9</div><div class="t" style="left:167.8px;top:59.6px;width:47.2px;overflow:hidden;color:#6a6a6a;font-size:6.5px;letter-spacing:0.2px">2017/12/12 14:3</div><svg class="a" style="left:9.8px;top:69.9px" width="7.6" height="8.6" viewBox="0 0 7.6 8.6"><path d="M0.8 0.8h2.4l0.7 0.9h3v6.3H0.8z" fill="#e6c95e"/><path d="M0.8 2.4h3.6v5.6H0.8z" fill="#f8ecae"/><path d="M4.4 1.7h2.5v6.3H4.4z" fill="#d9b94a"/></svg><div class="t " style="left:19.0px;top:70.5px;font-size:6.5px;letter-spacing:0.2px;color:#1e1e1e">GitHub</div><div class="t" style="left:167.8px;top:70.5px;width:47.2px;overflow:hidden;color:#6a6a6a;font-size:6.5px;letter-spacing:0.2px">2017/12/12 11:4</div><svg class="a" style="left:9.8px;top:80.7px" width="7.6" height="8.6" viewBox="0 0 7.6 8.6"><path d="M0.8 0.8h2.4l0.7 0.9h3v6.3H0.8z" fill="#e6c95e"/><path d="M0.8 2.4h3.6v5.6H0.8z" fill="#f8ecae"/><path d="M4.4 1.7h2.5v6.3H4.4z" fill="#d9b94a"/></svg><div class="t " style="left:19.0px;top:81.3px;font-size:6.5px;letter-spacing:0.2px;color:#1e1e1e">iZotope</div><div class="t" style="left:167.8px;top:81.3px;width:47.2px;overflow:hidden;color:#6a6a6a;font-size:6.5px;letter-spacing:0.2px">2017/12/12 14:0</div><div class="a" style="left:5.4px;top:90.2px;width:209.8px;height:8px;background:#f0f0f0"></div><div class="a" style="left:14.5px;top:90.4px;width:114.6px;height:7.6px;box-sizing:border-box;border:0.6px solid #b2b2b2;border-radius:1.2px;background:linear-gradient(#f3f3f3 0,#e2e2e2 45%,#cfcfcf 55%,#d8d8d8 100%)"></div><svg class="a" style="left:5.4px;top:90.2px" width="210" height="8" viewBox="0 0 210 8"><path d="M4.6 2.4l-1.8 1.6 1.8 1.6z M204.4 2.4l1.8 1.6-1.8 1.6z" fill="#444"/><path d="M64.8 2.6v2.8M66.2 2.6v2.8M67.6 2.6v2.8" stroke="#777" stroke-width="0.5"/></svg><div class="a" style="left:215.2px;top:34.5px;width:8.6px;height:55.6px;background:#f0f0f0"></div><div class="a" style="left:216.0px;top:43.7px;width:7.4px;height:10.6px;box-sizing:border-box;border:0.6px solid #b2b2b2;border-radius:1.2px;background:linear-gradient(90deg,#f3f3f3 0,#e2e2e2 45%,#cfcfcf 55%,#d8d8d8 100%)"></div><svg class="a" style="left:215.2px;top:34.5px" width="9" height="56" viewBox="0 0 9 56"><path d="M2.8 5.6l1.6-1.8 1.6 1.8z M2.8 49l1.6 1.8 1.6-1.8z" fill="#444"/><path d="M3.2 13.2h2.6M3.2 14.6h2.6M3.2 16h2.6" stroke="#777" stroke-width="0.5"/></svg><svg class="a" style="left:232.2px;top:43.2px" width="53" height="52" viewBox="0 0 53 52"><rect x="0.6" y="0.6" width="51.6" height="50.6" fill="#fff"/><path d="M0.6 51V0.6H52" stroke="#6d6d6d" stroke-width="0.8" fill="none"/><path d="M1 1L52 51M52 1L1 51" stroke="#555" stroke-width="0.6"/></svg><div class="a" style="left:232.7px;top:105.8px;width:5.8px;height:5.8px;box-sizing:border-box;border:0.6px solid #b3b3b3;background:#f4f4f4"></div><div class="t g" style="left:241.2px;top:104.8px;">预览<span class="m">(<u>P</u>)</span></div><div class="t " style="left:3.8px;top:102.8px;">文件名<span class="m">(<u>N</u>):</span></div><div class="fld" style="left:44.8px;top:101.5px;width:128.6px;height:10.6px;border-color:#e3e5e8"></div><div class="arr" style="left:167.6px;top:106.0px"></div><div class="t " style="left:3.8px;top:114.7px;">文件类型<span class="m">(<u>T</u>):</span></div><div class="fld" style="left:44.8px;top:114.5px;width:128.6px;height:10.7px;border-color:#e3e5e8"></div><div class="t " style="left:46.6px;top:116.2px;">所有文件格式</div><div class="arr" style="left:167.6px;top:119.0px"></div><div class="t " style="left:3.8px;top:127.6px;">排序类型<span class="m">(<u>R</u>):</span></div><div class="a" style="left:44.8px;top:127.5px;width:128.6px;height:10.4px;box-sizing:border-box;border:0.7px solid #8f9296;border-radius:1.4px;background:linear-gradient(#f4f4f4 0,#e9e9e9 48%,#d9d9d9 52%,#d2d2d2 100%)"></div><div class="t " style="left:46.8px;top:128.8px;">默认</div><div class="arr" style="left:167.6px;top:132.0px"></div><div class="t " style="left:3.8px;top:141.4px;">关键字<span class="m">:</span></div><div class="dfld" style="left:44.8px;top:142.4px;width:128.6px;height:9.6px"></div><div class="t " style="left:3.8px;top:157.0px;">注释<span class="m">:</span></div><div class="dfld" style="left:44.8px;top:157.5px;width:128.6px;height:29.2px"></div><div class="t " style="left:180.4px;top:116.8px;">文件版本<span class="m">:</span></div><div class="t " style="left:180.4px;top:126.0px;">压缩率<span class="m">:</span></div><div class="t " style="left:180.4px;top:135.5px;">上次保存方式<span class="m">:</span></div><div class="t " style="left:180.4px;top:152.6px;">上次保存位置<span class="m">:</span></div><div class="a" style="left:183.2px;top:187.7px;width:6.2px;height:6.2px;box-sizing:border-box;border:0.6px solid #b9b9b9;background:#f6f6f6"></div><div class="t g" style="left:191.5px;top:186.9px;">提取嵌入的<span class="m"> ICC </span>预置文件<span class="m">(<u>X</u>)</span></div><div class="a" style="left:183.2px;top:197.7px;width:6.2px;height:6.2px;box-sizing:border-box;border:0.6px solid #b9b9b9;background:#f6f6f6"></div><svg class="a" style="left:183.3px;top:197.8px" width="6" height="6" viewBox="0 0 6 6"><path d="M1.3 3.2l1.2 1.4L4.7 1.4" stroke="#9a9a9a" stroke-width="0.8" fill="none"/></svg><div class="t g" style="left:191.5px;top:196.9px;">保持图层和页面<span class="m">(<u>M</u>)</span></div><div class="a" style="left:5.6px;top:207.4px;width:278.6px;height:0.6px;background:#a4a4a4"></div><div class="a" style="left:5.6px;top:208.0px;width:278.6px;height:0.6px;background:#fdfdfd"></div><div class="a" style="left:172.3px;top:212.3px;width:50.8px;height:9.8px;box-sizing:border-box;border:0.8px solid #3a95cf;border-radius:1.5px;background:linear-gradient(#f3f9fd 0,#e4f1fa 48%,#cfe5f5 52%,#d9ecf8 100%);box-shadow:inset 0 0 0 0.6px #7fd0f5"></div><div class="a" style="left:229.4px;top:212.3px;width:50.8px;height:9.8px;box-sizing:border-box;border:0.7px solid #8a8a8a;border-radius:1.5px;background:linear-gradient(#f5f5f5 0,#ececec 48%,#dcdcdc 52%,#d3d3d3 100%)"></div><div class="t" style="left:172.3px;top:213.3px;width:50.8px;text-align:center">打开</div><div class="t" style="left:229.4px;top:213.3px;width:50.8px;text-align:center">取消</div></div>
<svg class="a" style="left:0;top:6px" width="215" height="66" viewBox="0 6 215 66">
<defs><filter id="gl" x="-10%" y="-20%" width="120%" height="140%"><feGaussianBlur stdDeviation="2.2"/></filter></defs>
<g filter="url(#gl)" opacity="0.38" fill="#fff" stroke="#fff" stroke-width="4">
<ellipse cx="32" cy="37" rx="27" ry="24"/><rect x="66" y="19" width="134" height="22"/><rect x="66" y="50" width="134" height="13"/>
</g>
<g opacity="0.8" transform="translate(1.3 0)">
<path d="M6.1 42.1A26 25.2 0 1 1 57.3 34.6Q55 38 50.4 40.5Q44 45 36.6 47Q28 48.6 20.3 47Q14 45.6 6.1 42.1Z" fill="#0a80cf"/>
</g>
<g fill="#ffffff" opacity="0.9" transform="translate(1.3 0)">
<path d="M5.4 43C8.4 35 16 28.4 27.4 26.2L28 28.4C18.4 30.2 11.4 36 7.8 44.2Z"/>
<path d="M27.6 27.6L17.2 38.6L19.2 38.6L19.2 47.2L28.7 47.4L28.7 28.6Z"/>
<path d="M48.4 19L37.8 30L39.8 30L39.8 46.4L48.1 44L48.1 22.6L55.6 24.4L54.6 21.6Z"/>
<path d="M23.2 20.8l0.7 1.9 2 0.1-1.6 1.25 0.6 1.95-1.7-1.15-1.7 1.15 0.6-1.95-1.6-1.25 2-0.1z"/>
</g>
<g opacity="0.95">
<path d="M29.2 67.4L29.2 55.6Q39 53.2 48 49.2Q56.5 45 61 35.3Q62.6 42 59.1 48.5Q55.5 56.5 48 62.5L48 51.6L38.1 56L38.1 67.4ZM9.6 52.9Q14 55.6 19.8 56L19.2 60.8Q14.4 58 9.6 52.9Z" fill="#f5a23c"/>
</g>
<g font-family="Liberation Serif,Noto Serif CJK SC,serif" font-weight="900" font-size="26.5" fill="#3d9fe8" stroke="#3d9fe8" stroke-width="0.4" stroke-linejoin="round" opacity="0.9" transform="scale(1.045 1)">
<text x="62.58 88.8 115.02 141.15 167.37" y="40.5">河东软件园</text></g>
<g font-family="Liberation Serif,serif" font-weight="700" font-size="18.6" fill="#4ea63c" stroke="#4ea63c" stroke-width="0.35" opacity="0.92">
<text x="66.3" y="63.2" textLength="134.4" lengthAdjust="spacing">www.pc0359.cn</text></g>
</svg>
</body></html>
